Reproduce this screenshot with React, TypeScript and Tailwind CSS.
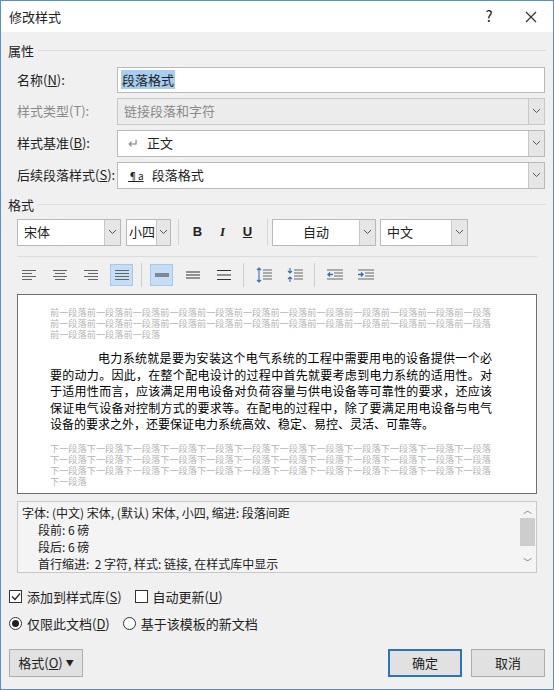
import React from 'react';

const F = { fontFamily: '"Noto Sans CJK SC", "Liberation Sans", sans-serif' };

function Chevron() {
  return (
    <svg width="9" height="6" viewBox="0 0 9 6"><path d="M1 1l3.5 3.5L8 1" fill="none" stroke="#555" strokeWidth="1" /></svg>
  );
}

function Select({ children, className, disabled }: { children?: React.ReactNode; className: string; disabled?: boolean }) {
  return (
    <div className={`flex h-[27px] border ${disabled ? 'border-[#c8c8c8] bg-[#ececec]' : 'border-[#b9b9b9] bg-white'} ${className}`}>
      <div className={`flex-1 flex items-center px-[6px] text-[13px] whitespace-nowrap overflow-hidden ${disabled ? 'text-[#8a8a8a]' : 'text-[#222]'}`}>{children}</div>
      <div className="w-[16px] shrink-0 border-l border-[#c8c8c8] bg-[#e6e6e6] flex items-center justify-center"><Chevron /></div>
    </div>
  );
}

function U({ c }: { c: string }) {
  return <span className="underline">{c}</span>;
}

function Lines({ d }: { d: number[] }) {
  return (
    <svg width="16" height="12" viewBox="0 0 16 12">
      {d.map((w, i) => {
        const [x1, x2] = w === 0 ? [1, 15] : w === 1 ? [1, 11] : w === 2 ? [3, 13] : [5, 15];
        return <line key={i} x1={x1} x2={x2} y1={1.5 + i * 3} y2={1.5 + i * 3} stroke="#666" />;
      })}
    </svg>
  );
}

const before = '前一段落'.repeat(24) + '前一段落前一段落前一段落';
const after = '下一段落'.repeat(36) + '下一段落';

export default function App() {
  return (
    <div style={F} className="w-[554px] h-[690px] bg-[#f0f0f0] border border-[#5a8fc8] flex flex-col text-[13px] text-[#222] overflow-hidden">
      <div className="h-[31px] bg-white flex items-center pl-2 shrink-0">
        <span className="flex-1 text-[13px]">修改样式</span>
        <span className="w-[40px] text-center text-[15px]">?</span>
        <svg className="mx-[16px]" width="12" height="12" viewBox="0 0 12 12"><path d="M1 1l10 10M11 1L1 11" stroke="#333" strokeWidth="1.2" /></svg>
      </div>

      <div className="px-[7px] pt-[9px] flex items-center gap-1"><span>属性</span><div className="flex-1 h-px bg-[#dcdcdc]" /></div>
      <div className="pl-[16px] pr-[8px] flex flex-col gap-[5px] mt-[6px]">
        <div className="flex items-center">
          <span className="w-[100px]">名称(<U c="N" />):</span>
          <div className="flex-1 h-[26px] border border-[#b9b9b9] bg-white flex items-center px-[3px]">
            <span className="bg-[#a8cdef] px-px">段落格式</span>
          </div>
        </div>
        <div className="flex items-center">
          <span className="w-[100px] text-[#8a8a8a]">样式类型(T):</span>
          <Select className="flex-1" disabled>链接段落和字符</Select>
        </div>
        <div className="flex items-center">
          <span className="w-[100px]">样式基准(<U c="B" />):</span>
          <Select className="flex-1"><span className="text-[#888] mr-2 ml-1">↵</span>正文</Select>
        </div>
        <div className="flex items-center">
          <span className="w-[100px]">后续段落样式(<U c="S" />):</span>
          <Select className="flex-1"><span className="text-[10px] underline mr-2 ml-1">¶a</span>段落格式</Select>
        </div>
      </div>

      <div className="px-[7px] pt-[6px] flex items-center gap-1"><span>格式</span><div className="flex-1 h-px bg-[#dcdcdc]" /></div>
      <div className="px-[16px] mt-[4px] flex items-center h-[28px]">
        <Select className="w-[104px]">宋体</Select>
        <div className="flex h-[27px] w-[45px] ml-[5px] border border-[#b9b9b9] bg-white">
          <div className="flex-1 flex items-center pl-[2px] whitespace-nowrap overflow-hidden">小四</div>
          <div className="w-[14px] shrink-0 border-l border-[#c8c8c8] bg-[#e6e6e6] flex items-center justify-center"><Chevron /></div>
        </div>
        <div className="w-px h-[26px] bg-[#d4d4d4] ml-[7px]" />
        <span className="w-[25px] text-center font-bold ml-[6px]" style={{ fontFamily: 'Liberation Sans' }}>B</span>
        <span className="w-[25px] text-center italic font-bold" style={{ fontFamily: 'Liberation Serif' }}>I</span>
        <span className="w-[25px] text-center font-bold underline" style={{ fontFamily: 'Liberation Sans' }}>U</span>
        <div className="w-px h-[26px] bg-[#d4d4d4] ml-[7px]" />
        <Select className="w-[104px] ml-[4px]"><span className="flex-1 text-center">自动</span></Select>
        <Select className="w-[88px] ml-[4px]">中文</Select>
      </div>
      <div className="mx-[16px] h-px bg-[#dcdcdc] mt-[10px]" />
      <div className="px-[16px] mt-[6px] flex items-center h-[24px] gap-[8px]">
        {[[0, 1, 0, 1], [0, 2, 0, 2], [0, 3, 0, 3], [0, 0, 0, 0]].map((d, i) => (
          <div key={i} className={`w-[23px] h-[22px] flex items-center justify-center ${i === 3 ? 'bg-[#c5def5] border border-[#a6c8ea]' : ''}`}><Lines d={d} /></div>
        ))}
        <div className="w-px h-[24px] bg-[#cfcfcf]" />
        <div className="w-[23px] h-[22px] flex items-center justify-center bg-[#c5def5] border border-[#a6c8ea]">
          <svg width="16" height="8"><line x1="1" x2="15" y1="3" y2="3" stroke="#333" /><line x1="1" x2="15" y1="5" y2="5" stroke="#333" /></svg>
        </div>
        <div className="w-[23px] h-[22px] flex items-center justify-center"><svg width="16" height="10"><line x1="1" x2="15" y1="2" y2="2" stroke="#333" /><line x1="1" x2="15" y1="5" y2="5" stroke="#333" /><line x1="1" x2="15" y1="8" y2="8" stroke="#333" /></svg></div>
        <div className="w-[23px] h-[22px] flex items-center justify-center"><svg width="16" height="12"><line x1="1" x2="15" y1="1.5" y2="1.5" stroke="#333" /><line x1="1" x2="15" y1="6" y2="6" stroke="#333" /><line x1="1" x2="15" y1="10.5" y2="10.5" stroke="#333" /></svg></div>
        <div className="w-px h-[24px] bg-[#cfcfcf]" />
        {[0, 1].map((k) => (
          <div key={k} className="w-[23px] h-[22px] flex items-center justify-center">
            <svg width="18" height="16" viewBox="0 0 18 16">
              <path d={k === 0 ? 'M4 1v14M2 3l2-2 2 2M2 13l2 2 2-2' : 'M4 1v5M4 10v5M2 4l2 2 2-2M2 12l2-2 2 2'} fill="none" stroke="#3b6fb0" strokeWidth="1.1" />
              {[3, 6, 9, 12].map((y) => <line key={y} x1="8" x2="17" y1={y} y2={y} stroke="#666" />)}
            </svg>
          </div>
        ))}
        <div className="w-px h-[24px] bg-[#cfcfcf]" />
        {[0, 1].map((k) => (
          <div key={k} className="w-[23px] h-[22px] flex items-center justify-center">
            <svg width="18" height="14" viewBox="0 0 18 14">
              {[2, 5, 8, 11].map((y) => <line key={y} x1={y === 2 || y === 11 ? 1 : 8} x2="17" y1={y} y2={y} stroke="#666" />)}
              <path d={k === 0 ? 'M7 6.5H2M4 4.5l-2 2 2 2' : 'M1 6.5h5M4 4.5l2 2-2 2'} fill="none" stroke="#3b6fb0" strokeWidth="1.4" />
            </svg>
          </div>
        ))}
      </div>

      <div className="mx-[16px] mt-[7px] h-[200px] bg-white border border-[#6e6e6e] overflow-hidden pl-[32px] pr-[44px] pt-[12px]">
        <p className="text-[9.2px] leading-[11px] text-[#b4b4b4] break-all">{before}</p>
        <p className="text-[12px] leading-[16.5px] text-black mt-[10px] indent-[48px] break-all text-justify">电力系统就是要为安装这个电气系统的工程中需要用电的设备提供一个必要的动力。因此，在整个配电设计的过程中首先就要考虑到电力系统的适用性。对于适用性而言，应该满足用电设备对负荷容量与供电设备等可靠性的要求，还应该保证电气设备对控制方式的要求等。在配电的过程中，除了要满足用电设备与电气设备的要求之外，还要保证电力系统高效、稳定、易控、灵活、可靠等。</p>
        <p className="text-[9.2px] leading-[11px] text-[#b4b4b4] mt-[10px] break-all">{after}</p>
      </div>

      <div className="mx-[16px] mt-[7px] h-[72px] bg-[#f4f4f4] border border-[#c8c8c8] flex">
        <div className="flex-1 pl-[4px] pt-[2px] text-[12px] leading-[17px]">
          <div>字体: (中文) 宋体, (默认) 宋体, 小四, 缩进: 段落间距</div>
          <div className="pl-[16px]">段前: 6 磅</div>
          <div className="pl-[16px]">段后: 6 磅</div>
          <div className="pl-[16px]">首行缩进:&nbsp; 2 字符, 样式: 链接, 在样式库中显示</div>
        </div>
        <div className="w-[17px] flex flex-col items-center">
          <span className="text-[9px] text-[#777] h-[14px] leading-[16px]">︿</span>
          <div className="w-[15px] h-[28px] bg-[#cdcdcd] mt-[2px]" />
          <div className="flex-1" />
          <span className="text-[9px] text-[#777] h-[16px]">﹀</span>
        </div>
      </div>

      <div className="px-[8px] mt-[14px] flex items-center gap-[5px]">
        <div className="w-[13px] h-[13px] border border-[#333] bg-white flex items-center justify-center">
          <svg width="10" height="9"><path d="M1 4.5l3 3 5-6" fill="none" stroke="#222" strokeWidth="1.2" /></svg>
        </div>
        <span>添加到样式库(<U c="S" />)</span>
        <div className="w-[13px] h-[13px] border border-[#333] bg-white ml-[8px]" />
        <span>自动更新(<U c="U" />)</span>
      </div>
      <div className="px-[8px] mt-[7px] flex items-center gap-[5px]">
        <div className="w-[13px] h-[13px] rounded-full border border-[#333] bg-white flex items-center justify-center"><div className="w-[7px] h-[7px] rounded-full bg-[#222]" /></div>
        <span>仅限此文档(<U c="D" />)</span>
        <div className="w-[13px] h-[13px] rounded-full border border-[#333] bg-white ml-[8px]" />
        <span>基于该模板的新文档</span>
      </div>

      <div className="px-[8px] mt-[16px] flex items-center">
        <div className="w-[74px] h-[28px] border border-[#adadad] bg-[#e1e1e1] flex items-center justify-center"><span>格式(<U c="O" />)</span><span className="text-[8px] ml-[3px]">▼</span></div>
        <div className="flex-1" />
        <div className="w-[74px] h-[28px] border-2 border-[#2b74bb] bg-[#e1e1e1] flex items-center justify-center">确定</div>
        <div className="w-[74px] h-[28px] border border-[#adadad] bg-[#e1e1e1] flex items-center justify-center ml-[9px]">取消</div>
      </div>
    </div>
  );
}
